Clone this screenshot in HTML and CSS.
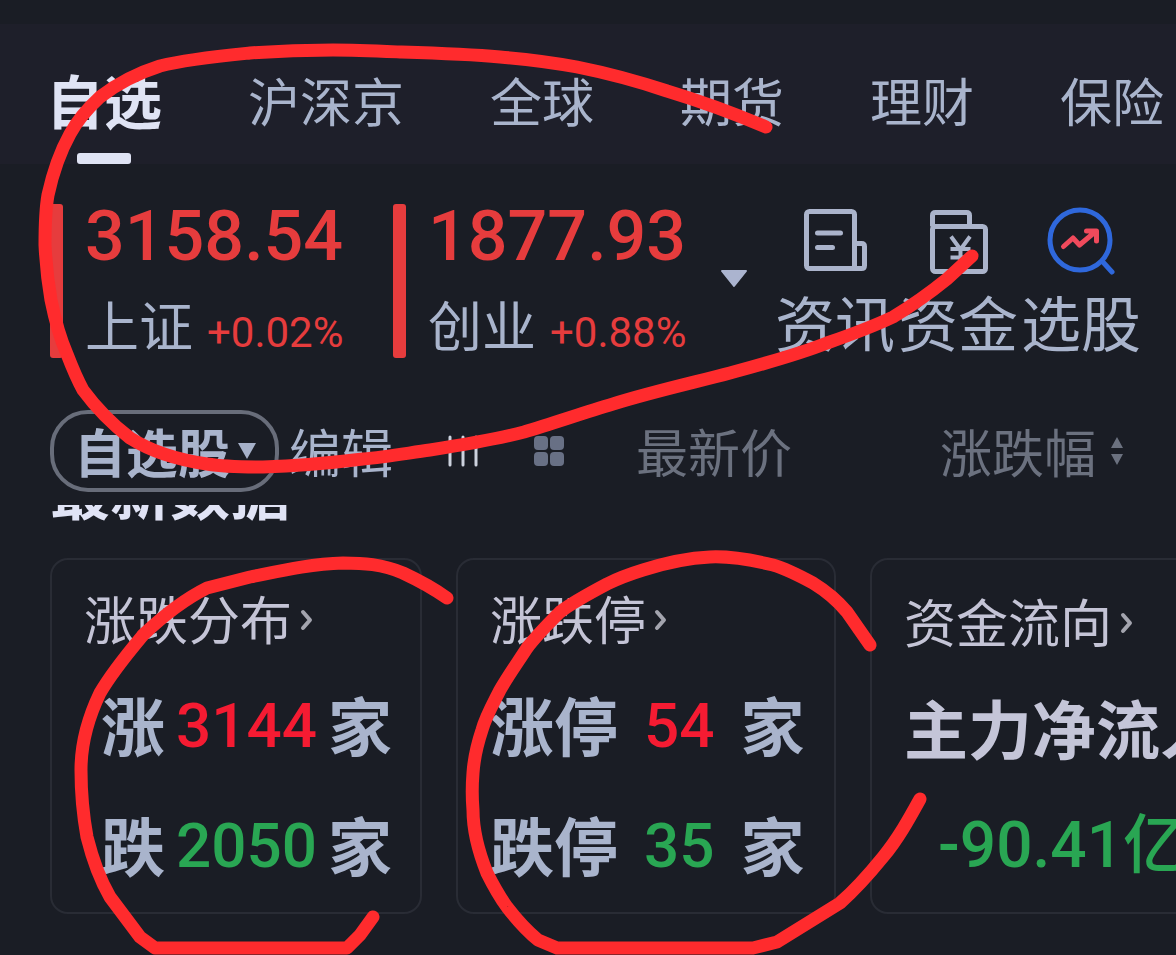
FILE: index.html
```html
<!DOCTYPE html>
<html lang="zh-CN">
<head>
<meta charset="utf-8">
<meta name="viewport" content="width=device-width, initial-scale=1">
<title>自选</title>
<link rel="stylesheet" href="styles.css">
</head>
<body>
<div class="app">
  <nav class="tabs" aria-label="市场">
    <a class="tab tab-active" href="#watch" aria-current="page">自选</a>
    <a class="tab" href="#hsj">沪深京</a>
    <a class="tab" href="#global">全球</a>
    <a class="tab" href="#futures">期货</a>
    <a class="tab" href="#wealth">理财</a>
    <a class="tab" href="#insurance">保险</a>
  </nav>

  <main>
    <section class="overview">
      <div class="quote">
        <div class="quote-value">3158.54</div>
        <div class="quote-foot"><span class="quote-name">上证</span><span class="quote-change">+0.02%</span></div>
      </div>
      <div class="quote">
        <div class="quote-value">1877.93</div>
        <div class="quote-foot"><span class="quote-name">创业</span><span class="quote-change">+0.88%</span></div>
      </div>
      <button class="expand" type="button" aria-label="展开指数">
        <svg width="28" height="18" viewBox="0 0 28 18"><path d="M2 1h24L14 16z" fill="#abb4cf" stroke="#abb4cf" stroke-width="2" stroke-linejoin="round"/></svg>
      </button>
      <div class="shortcuts">
        <a class="shortcut" href="#news">
          <svg width="70" height="68" viewBox="0 0 70 68" fill="none" stroke="#abb4cb" stroke-width="5" stroke-linecap="round" stroke-linejoin="round">
            <rect x="6.500" y="4.500" width="48" height="57" rx="3"/>
            <path d="M54.500 36.500h7q3 0 3 3v19q0 3-3 3h-9M17.500 26h23M17.500 40.500h15"/>
          </svg>
          <span>资讯</span>
        </a>
        <a class="shortcut" href="#funds">
          <svg width="70" height="68" viewBox="0 0 70 68" fill="none" stroke="#abb4cb" stroke-width="5" stroke-linejoin="round">
            <path d="M9.500 19.500v-11q0-3 3-3h31q3 0 3 3v11"/>
            <rect x="9.500" y="19.500" width="53" height="45" rx="3"/>
            <path d="M28 29.500l9.500 13L47 29.500M37.500 42v17M27.500 42h20M27.500 50.500h20" stroke-width="4"/>
          </svg>
          <span>资金</span>
        </a>
        <a class="shortcut" href="#pick">
          <svg width="70" height="68" viewBox="0 0 70 68" fill="none" stroke-linecap="round" stroke-linejoin="round">
            <circle cx="34" cy="33" r="30" stroke="#2f68dc" stroke-width="5"/>
            <path d="M56 54l10 11" stroke="#2f68dc" stroke-width="5"/>
            <path d="M17.500 39.500l9.500-8.500 6.500 7L49 25M40.500 24h10v10" stroke="#f04a5c" stroke-width="5"/>
          </svg>
          <span>选股</span>
        </a>
      </div>
    </section>

    <section class="toolbar">
      <button class="group" type="button">自选股
        <svg width="20" height="18" viewBox="0 0 20 18"><path d="M1 1h18L10 17z" fill="#a6b1c9"/></svg>
      </button>
      <button class="edit" type="button">编辑</button>
      <button class="icon-button columns-button" type="button" aria-label="列设置">
        <svg width="32" height="32" viewBox="0 0 32 32" stroke="#ccd2de" stroke-width="3" stroke-linecap="round"><path d="M3 2v28M16 2v28M29 2v28"/></svg>
      </button>
      <button class="icon-button" type="button" aria-label="宫格">
        <svg width="32" height="32" viewBox="0 0 32 32" fill="#687085"><rect x="1" y="1" width="14" height="14" rx="4"/><rect x="17" y="1" width="14" height="14" rx="4"/><rect x="1" y="17" width="14" height="14" rx="4"/><rect x="17" y="17" width="14" height="14" rx="4"/></svg>
      </button>
      <button class="sort sort-price" type="button">最新价</button>
      <button class="sort sort-change" type="button">涨跌幅
        <svg width="14" height="30" viewBox="0 0 14 30" fill="#6b717f"><path d="M7 1l6 11H1zM7 29l6-11H1z"/></svg>
      </button>
    </section>

    <section class="latest">
      <h2>最新数据</h2>
    </section>

    <section class="cards">
      <article class="card card-spread">
        <h3><a href="#spread">涨跌分布<svg class="chevron" width="14" height="26" viewBox="0 0 14 26"><path d="M3 7l7 8-7 8" fill="none" stroke="#a3a4ae" stroke-width="4" stroke-linecap="round" stroke-linejoin="round"/></svg></a></h3>
        <p class="stat">涨<strong class="up">3144</strong>家</p>
        <p class="stat">跌<strong class="down">2050</strong>家</p>
      </article>
      <article class="card card-limit">
        <h3><a href="#limit">涨跌停<svg class="chevron" width="14" height="26" viewBox="0 0 14 26"><path d="M3 7l7 8-7 8" fill="none" stroke="#a3a4ae" stroke-width="4" stroke-linecap="round" stroke-linejoin="round"/></svg></a></h3>
        <p class="stat">涨停<strong class="up">54</strong>家</p>
        <p class="stat">跌停<strong class="down">35</strong>家</p>
      </article>
      <article class="card card-flow">
        <h3><a href="#flow">资金流向<svg class="chevron" width="14" height="26" viewBox="0 0 14 26"><path d="M3 7l7 8-7 8" fill="none" stroke="#a3a4ae" stroke-width="4" stroke-linecap="round" stroke-linejoin="round"/></svg></a></h3>
        <p class="stat">主力净流入</p>
        <p class="stat flow-value"><strong class="down">-90.41亿</strong></p>
      </article>
    </section>
  </main>

  <svg class="ink" width="1176" height="955" viewBox="0 0 1176 955" aria-hidden="true">
    <path d="M766 127C733 113 700 101 667 91C637 81 607 73 577 67C550 62 525 59 500 57C467 54 433 53 400 52C377 51 355 50 333 50C305 50 277 51 250 53C220 56 188 59 160 66C138 73 118 83 100 97C87 109 78 119 70 134C60 152 53 172 48 195C45 212 45 228 45 245C46 265 48 283 51 300C55 320 60 338 67 354C72 367 77 379 83 390C97 409 112 424 130 438C152 452 179 460 207 464C226 467 245 467 263 467C297 466 330 463 363 459C386 457 408 453 430 450C462 445 494 440 524 432C554 423 583 413 613 404C651 392 696 382 730 373C763 364 797 355 827 343C850 335 872 327 893 317C913 305 931 292 947 279L972 256"/>
    <path d="M447 598C433 588 418 580 403 573C382 564 363 563 343 563C310 564 280 571 250 577L207 588C183 600 162 617 143 635C128 653 112 672 100 693C88 718 81 745 81 770C81 792 83 815 87 837C92 857 99 878 110 897L140 937L155 948H347L360 935L373 917"/>
    <path d="M870 645L847 612C837 600 826 591 813 583C800 576 787 569 773 565C752 560 731 556 710 557C688 558 665 563 643 570C630 574 617 579 607 584C590 593 573 602 560 612C548 624 536 636 527 648C518 662 508 676 500 690C493 704 486 716 482 730C477 745 474 758 473 773C472 785 472 798 473 810C473 832 479 853 487 873C493 885 499 896 507 907C517 920 527 931 538 940L557 948H753L777 942L840 903C856 889 870 873 883 857C898 839 909 819 920 799"/>
  </svg>
</div>
</body>
</html>
```
FILE: styles.css
```css
* {
  box-sizing: border-box;
}

body {
  margin: 0;
  background: #1a1d25;
  color: #a9b4cc;
  font-family: "Noto Sans CJK SC", sans-serif;
  white-space: nowrap;
}

a {
  color: inherit;
  text-decoration: none;
}

button {
  padding: 0;
  border: 0;
  background: none;
  color: inherit;
  font: inherit;
}

h2,
h3,
p {
  margin: 0;
}

svg {
  display: block;
  flex: none;
}

.app {
  position: relative;
  min-height: 100vh;
  padding-top: 24px;
  overflow: hidden;
}

.tabs {
  display: flex;
  gap: 86px;
  align-items: stretch;
  height: 140px;
  padding-left: 46px;
  background: #1e1f2a;
  font-size: 52px;
  line-height: 152px;
}

.tab-active {
  display: flex;
  flex-direction: column;
  align-items: center;
  justify-content: flex-end;
  color: #dfe3f4;
  font-size: 58px;
  font-weight: 700;
  line-height: 108px;
}

.tab-active::after {
  content: "";
  width: 54px;
  height: 11px;
  border-radius: 3px;
  background: #dfe3f4;
}

.overview {
  display: flex;
  padding: 40px 35px 0 50px;
}

.quote {
  position: relative;
  display: flex;
  flex-direction: column;
  gap: 28px;
  width: 343px;
  height: 154px;
  padding-left: 35px;
}

.quote::before {
  content: "";
  position: absolute;
  inset: 0 auto 0 0;
  width: 13px;
  border-radius: 3px;
  background: #e63c3d;
}

.quote-value {
  color: #e63c3d;
  font-family: Roboto, "Noto Sans CJK SC", sans-serif;
  font-size: 70px;
  font-weight: 500;
  line-height: 64px;
}

.quote-foot {
  display: flex;
  gap: 14px;
  align-items: baseline;
  line-height: 56px;
}

.quote-name {
  font-size: 54px;
}

.quote-change {
  color: #e63c3d;
  font-family: Roboto, "Noto Sans CJK SC", sans-serif;
  font-size: 42px;
}

.expand {
  align-self: flex-start;
  width: 28px;
  margin: 66px 0 0 -16px;
}

.shortcuts {
  display: flex;
  gap: 3px;
  margin-left: auto;
  padding-top: 3px;
}

.shortcut {
  display: flex;
  flex-direction: column;
  gap: 16px;
  align-items: center;
  font-size: 60px;
  line-height: 60px;
}

.toolbar {
  display: flex;
  align-items: center;
  height: 82px;
  margin-top: 52px;
  padding: 0 52px 0 50px;
  font-size: 52px;
  line-height: 72px;
}

.group {
  display: flex;
  gap: 7px;
  align-items: center;
  height: 82px;
  padding: 0 18px 0 20px;
  border: 4px solid #686d7a;
  border-radius: 38px;
  font-weight: 700;
}

.edit {
  margin-left: 10px;
}

.icon-button {
  margin-left: 54px;
}

.sort {
  display: flex;
  gap: 14px;
  align-items: center;
  color: #6b717f;
}

.sort-price {
  margin-left: 71px;
}

.sort-change {
  margin-left: auto;
}

.latest {
  display: flex;
  align-items: flex-end;
  height: 18px;
  margin: 13px 0 35px;
  padding-left: 50px;
  overflow: hidden;
}

.latest h2 {
  color: #e0e3f5;
  font-size: 60px;
  font-weight: 700;
  line-height: 68px;
}

.cards {
  display: flex;
  gap: 34px;
  padding-left: 50px;
  overflow: hidden;
}

.card {
  display: flex;
  flex: none;
  flex-direction: column;
  height: 356px;
  padding: 25px 32px 0;
  border: 2px solid #292c35;
  border-radius: 18px;
}

.card-spread {
  width: 372px;
}

.card-limit {
  width: 380px;
}

.card-flow {
  width: 400px;
  padding-top: 28px;
}

.card h3 {
  margin-bottom: 12px;
  color: #c4c4d6;
  font-size: 52px;
  font-weight: 400;
  line-height: 66px;
}

.card h3 a {
  display: flex;
  gap: 8px;
  align-items: center;
}

.stat {
  display: flex;
  height: 120px;
  font-size: 64px;
  font-weight: 700;
  line-height: 120px;
}

.stat strong {
  font-family: Roboto, "Noto Sans CJK SC", sans-serif;
  font-size: 62px;
  font-weight: 500;
  line-height: 126px;
}

.card-spread .stat {
  gap: 11px;
  padding-left: 17px;
}

.card-limit .stat {
  gap: 26px;
}

.card-flow .stat {
  color: #c4c5d8;
}

.card-flow .flow-value {
  padding-left: 34px;
}

.card-flow .flow-value strong {
  font-size: 64px;
  line-height: 120px;
}

.stat .up {
  color: #f51b32;
}

.stat .down {
  color: #29a653;
}

.ink {
  position: absolute;
  top: 0;
  left: 0;
  fill: none;
  stroke: #ff2b2d;
  stroke-width: 13px;
  stroke-linecap: round;
  stroke-linejoin: round;
  pointer-events: none;
}
```
